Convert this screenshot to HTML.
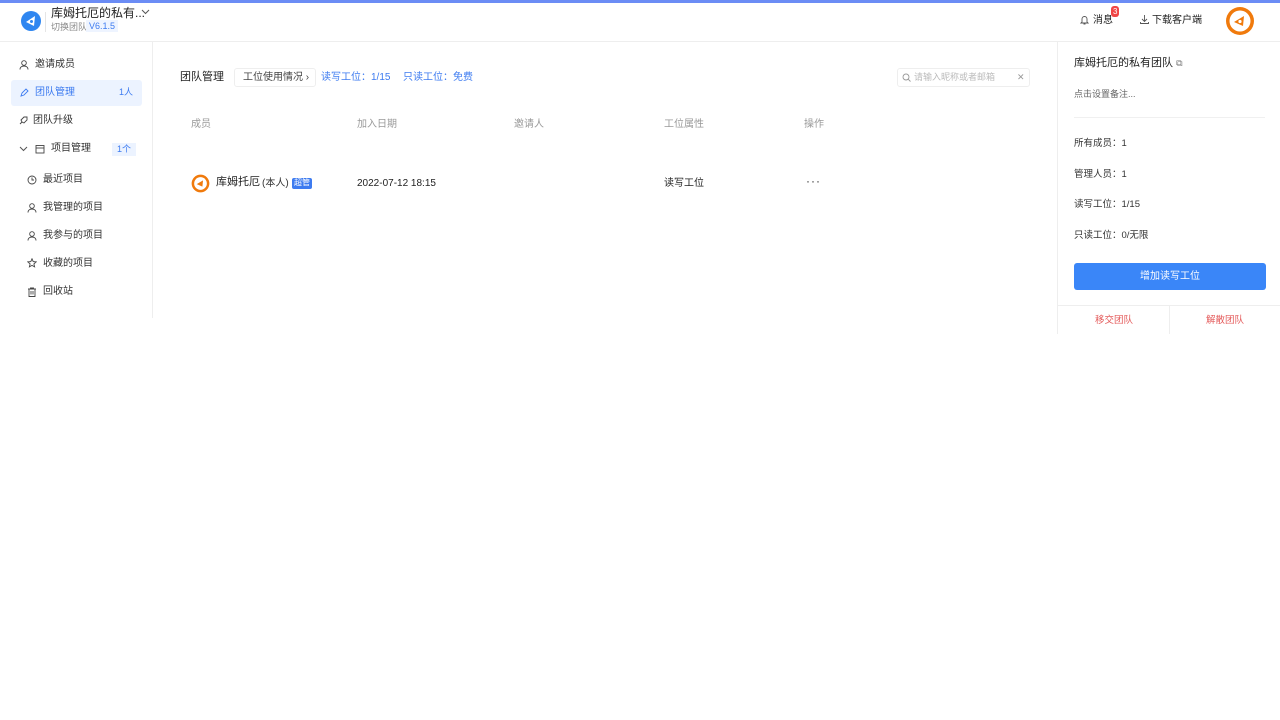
<!DOCTYPE html>
<html><head><meta charset="utf-8"><style>
*{box-sizing:border-box;margin:0;padding:0}
body{width:1280px;height:720px;background:#fff;font-family:"Liberation Sans","Noto Sans CJK SC",sans-serif;color:#333;position:relative;overflow:hidden;font-size:10px}
.a{position:absolute;white-space:nowrap;line-height:1.35}
.topbar{position:absolute;left:0;top:0;width:1280px;height:3px;background:#6b8cf5}
.hdr{position:absolute;top:3px;left:0;width:1280px;height:39px;border-bottom:1px solid #eee}
.side{position:absolute;left:0;top:42px;width:153px;height:276px;border-right:1px solid #eee}
.right{position:absolute;left:1057px;top:42px;width:223px;height:292px;border-left:1px solid #eee}
</style></head><body>
<div class="topbar"></div>
<div class="hdr"></div>
<svg class="a" style="left:20px;top:10px" width="22" height="22" viewBox="0 0 22 22"><circle cx="11" cy="11" r="10" fill="#2f86f0"/><path d="M6 12 L15 6 L14 16 Z" fill="#fff"/><circle cx="11.5" cy="11.5" r="1.5" fill="#2f86f0"/></svg>
<div class="a" style="left:45px;top:12px;width:1px;height:20px;background:#e5e5e5"></div>
<div class="a" style="left:51px;top:5px;font-size:12px;color:#222">库姆托厄的私有...</div>
<svg class="a" style="left:141px;top:9px" width="9" height="6" viewBox="0 0 9 6"><path d="M1 1l3.5 3.5L8 1" fill="none" stroke="#555" stroke-width="1"/></svg>
<div class="a" style="left:51px;top:21px;font-size:9px;color:#888">切换团队</div>
<div class="a" style="left:86px;top:20px;font-size:9px;color:#3d7bf0;background:#eef4ff;padding:0 3px">V6.1.5</div>
<svg class="a" style="left:1080px;top:15px" width="9" height="10" viewBox="0 0 9 10"><path d="M2 7V4a2.5 2.5 0 015 0v3l1 1H1z M3.5 9h2" fill="none" stroke="#555" stroke-width=".9"/></svg>
<div class="a" style="left:1093px;top:14px;font-size:10px;color:#222">消息</div>
<div class="a" style="left:1111px;top:6px;background:#f04545;color:#fff;font-size:8px;padding:0 2px;border-radius:3px;line-height:11px">3</div>
<svg class="a" style="left:1140px;top:15px" width="9" height="9" viewBox="0 0 9 9"><path d="M4.5 0v6M2 4l2.5 2.5L7 4M0.5 7v1.5h8V7" fill="none" stroke="#555" stroke-width=".9"/></svg>
<div class="a" style="left:1152px;top:14px;font-size:10px;color:#222">下载客户端</div>
<svg class="a" style="left:1225px;top:6px" width="30" height="30" viewBox="0 0 30 30"><circle cx="15" cy="15" r="14" fill="#f07a0c"/><circle cx="15" cy="15" r="10.5" fill="#fff"/><path d="M9 16 L19 10 L18 20 Z" fill="#f07a0c"/><circle cx="15" cy="15.5" r="1.6" fill="#fff"/></svg>

<div class="side"></div>
<svg class="a" style="left:19px;top:60px" width="10" height="10" viewBox="0 0 10 10"><circle cx="5" cy="3" r="2.3" fill="none" stroke="#444" stroke-width=".9"/><path d="M1 9.5c0-2.5 2-3.5 4-3.5s4 1 4 3.5" fill="none" stroke="#444" stroke-width=".9"/></svg>
<div class="a" style="left:35px;top:58px;font-size:10px;color:#333">邀请成员</div>
<div class="a" style="left:11px;top:80px;width:131px;height:26px;background:#ecf3ff;border-radius:3px"></div>
<svg class="a" style="left:20px;top:88px" width="9" height="9" viewBox="0 0 9 9"><path d="M1 8l1-3 4-4 2 2-4 4z" fill="none" stroke="#3d7bf0" stroke-width=".9"/></svg>
<div class="a" style="left:35px;top:86px;font-size:10px;color:#3d7bf0">团队管理</div>
<div class="a" style="left:119px;top:86px;font-size:9px;color:#3d7bf0">1人</div>
<svg class="a" style="left:19px;top:116px" width="9" height="9" viewBox="0 0 9 9"><path d="M1 8l2-2M3 6l-1-2 3-3h3v3l-3 3z" fill="none" stroke="#444" stroke-width=".9"/></svg>
<div class="a" style="left:33px;top:114px;font-size:10px;color:#333">团队升级</div>
<svg class="a" style="left:19px;top:146px" width="9" height="6" viewBox="0 0 9 6"><path d="M1 1l3.5 3.5L8 1" fill="none" stroke="#555" stroke-width="1"/></svg>
<svg class="a" style="left:35px;top:144px" width="10" height="10" viewBox="0 0 10 10"><rect x="1" y="1.5" width="8" height="7.5" fill="none" stroke="#444" stroke-width=".9"/><path d="M1 4h8" stroke="#444" stroke-width=".9"/></svg>
<div class="a" style="left:51px;top:142px;font-size:10px;color:#333">项目管理</div>
<div class="a" style="left:112px;top:143px;width:24px;height:13px;background:#ecf3ff;color:#3d7bf0;font-size:9px;text-align:center;line-height:13px">1个</div>
<svg class="a" style="left:27px;top:175px" width="10" height="10" viewBox="0 0 10 10"><circle cx="5" cy="5" r="4" fill="none" stroke="#444" stroke-width=".9"/><path d="M5 2.5V5h2" fill="none" stroke="#444" stroke-width=".9"/></svg>
<div class="a" style="left:43px;top:173px;font-size:10px;color:#333">最近项目</div>
<svg class="a" style="left:27px;top:203px" width="10" height="10" viewBox="0 0 10 10"><circle cx="5" cy="3" r="2.3" fill="none" stroke="#444" stroke-width=".9"/><path d="M1 9.5c0-2.5 2-3.5 4-3.5s4 1 4 3.5" fill="none" stroke="#444" stroke-width=".9"/></svg>
<div class="a" style="left:43px;top:201px;font-size:10px;color:#333">我管理的项目</div>
<svg class="a" style="left:27px;top:231px" width="10" height="10" viewBox="0 0 10 10"><circle cx="5" cy="3" r="2.3" fill="none" stroke="#444" stroke-width=".9"/><path d="M1 9.5c0-2.5 2-3.5 4-3.5s4 1 4 3.5" fill="none" stroke="#444" stroke-width=".9"/></svg>
<div class="a" style="left:43px;top:229px;font-size:10px;color:#333">我参与的项目</div>
<svg class="a" style="left:27px;top:258px" width="10" height="10" viewBox="0 0 10 10"><path d="M5 .8l1.2 2.8 3 .3-2.3 2 .7 3L5 7.4 2.4 8.9l.7-3-2.3-2 3-.3z" fill="none" stroke="#444" stroke-width=".9"/></svg>
<div class="a" style="left:43px;top:257px;font-size:10px;color:#333">收藏的项目</div>
<svg class="a" style="left:27px;top:287px" width="10" height="10" viewBox="0 0 10 10"><path d="M1 2h8M3.5 2V1h3v1M2 2v7.5h6V2M4 4v3.5M6 4v3.5" fill="none" stroke="#444" stroke-width=".9"/></svg>
<div class="a" style="left:43px;top:285px;font-size:10px;color:#333">回收站</div>

<div class="a" style="left:180px;top:70px;font-size:11px;color:#222">团队管理</div>
<div class="a" style="left:234px;top:68px;width:82px;height:19px;border:1px solid #eee;border-radius:3px;font-size:10px;color:#444;padding:2px 0 0 8px">工位使用情况 ›</div>
<div class="a" style="left:321px;top:71px;font-size:10px;color:#3d7bf0">读写工位：1/15</div>
<div class="a" style="left:403px;top:71px;font-size:10px;color:#3d7bf0">只读工位：免费</div>
<div class="a" style="left:897px;top:68px;width:133px;height:19px;border:1px solid #eee;border-radius:3px"></div>
<svg class="a" style="left:902px;top:73px" width="9" height="9" viewBox="0 0 9 9"><circle cx="4" cy="4" r="3" fill="none" stroke="#999" stroke-width=".9"/><path d="M6.2 6.2L8.5 8.5" stroke="#999" stroke-width=".9"/></svg>
<div class="a" style="left:914px;top:71px;font-size:9px;color:#bbb">请输入昵称或者邮箱</div>
<div class="a" style="left:1017px;top:71px;font-size:9px;color:#999">✕</div>

<div class="a" style="left:191px;top:118px;font-size:10px;color:#999">成员</div>
<div class="a" style="left:357px;top:118px;font-size:10px;color:#999">加入日期</div>
<div class="a" style="left:514px;top:118px;font-size:10px;color:#999">邀请人</div>
<div class="a" style="left:664px;top:118px;font-size:10px;color:#999">工位属性</div>
<div class="a" style="left:804px;top:118px;font-size:10px;color:#999">操作</div>

<svg class="a" style="left:191px;top:174px" width="19" height="19" viewBox="0 0 30 30"><circle cx="15" cy="15" r="14" fill="#f07a0c"/><circle cx="15" cy="15" r="10" fill="#fff"/><path d="M9 16 L19 10 L18 20 Z" fill="#f07a0c"/></svg>
<div class="a" style="left:216px;top:175px;font-size:11px;color:#222">库姆托厄</div>
<div class="a" style="left:262px;top:177px;font-size:10px;color:#333">(本人)</div>
<div class="a" style="left:292px;top:178px;font-size:8px;color:#fff;background:#3d7bf0;padding:0 2px;border-radius:2px">超管</div>
<div class="a" style="left:357px;top:177px;font-size:10px;color:#222">2022-07-12 18:15</div>
<div class="a" style="left:664px;top:177px;font-size:10px;color:#222">读写工位</div>
<div class="a" style="left:806px;top:173px;font-size:12px;color:#333;letter-spacing:1px">···</div>

<div class="right"></div>
<div class="a" style="left:1074px;top:56px;font-size:11px;color:#222">库姆托厄的私有团队 <span style="font-size:9px;color:#777">⧉</span></div>
<div class="a" style="left:1074px;top:88px;font-size:9px;color:#666">点击设置备注...</div>
<div class="a" style="left:1074px;top:117px;width:191px;height:1px;background:#f0f0f0"></div>
<div class="a" style="left:1074px;top:138px;font-size:9.5px;color:#333">所有成员：1</div>
<div class="a" style="left:1074px;top:169px;font-size:9.5px;color:#333">管理人员：1</div>
<div class="a" style="left:1074px;top:199px;font-size:9.5px;color:#333">读写工位：1/15</div>
<div class="a" style="left:1074px;top:230px;font-size:9.5px;color:#333">只读工位：0/无限</div>
<div class="a" style="left:1074px;top:263px;width:192px;height:27px;background:#3a86f8;border-radius:3px;color:#fff;font-size:10px;text-align:center;line-height:27px">增加读写工位</div>
<div class="a" style="left:1058px;top:305px;width:222px;height:1px;background:#eee"></div>
<div class="a" style="left:1169px;top:306px;width:1px;height:28px;background:#eee"></div>
<div class="a" style="left:1095px;top:315px;font-size:9.5px;color:#e45b5b">移交团队</div>
<div class="a" style="left:1206px;top:315px;font-size:9.5px;color:#e45b5b">解散团队</div>
</body></html>
